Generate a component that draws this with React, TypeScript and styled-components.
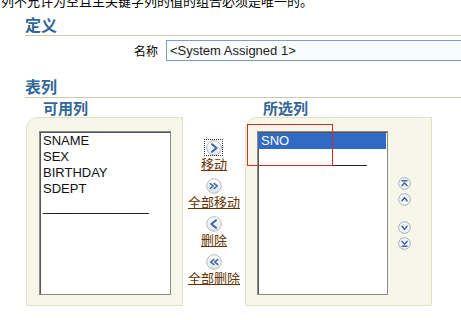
import * as React from 'react'
import styled, { createGlobalStyle } from 'styled-components'

const GlobalStyle = createGlobalStyle`
  html, body {
    margin: 0;
    padding: 0;
    background: #ffffff;
    overflow: hidden;
  }
  body {
    font-family: "Liberation Sans", "Noto Sans CJK SC", sans-serif;
    color: #000;
  }
`

const CJK = `"Noto Sans CJK SC", "Liberation Sans", sans-serif`

const Page = styled.div`
  width: 461px;
  height: 320px;
  overflow: hidden;
`

const Intro = styled.p`
  margin: -7px 0 0 1px;
  font-family: ${CJK};
  font-size: 13px;
  line-height: 15px;
  white-space: nowrap;
`

const Section = styled.section`
  padding-left: 25px;
`

const SectionTitle = styled.h2<{ $gap: number }>`
  margin: ${p => p.$gap}px 0 0;
  padding-bottom: 2px;
  font-family: ${CJK};
  font-size: 16px;
  line-height: 18px;
  font-weight: bold;
  color: #336699;
  border-bottom: 1px solid #cfcba8;
`

const FieldRow = styled.div`
  display: flex;
  align-items: center;
  margin-top: 4px;
  height: 21px;
`

const FieldLabel = styled.label`
  flex: none;
  width: 133px;
  margin-right: 8px;
  text-align: right;
  font-family: ${CJK};
  font-size: 12px;
`

const TextInput = styled.input`
  box-sizing: border-box;
  flex: none;
  width: 310px;
  height: 21px;
  padding: 0 3px;
  border: 1px solid #7f9db9;
  background: #f9fbfe;
  font-family: "Liberation Sans", sans-serif;
  font-size: 13px;
  color: #222;
  outline: none;
`

const Columns = styled.div`
  display: flex;
  align-items: flex-start;
  padding-left: 1px;
`

const Column = styled.div<{ $width: number }>`
  width: ${p => p.$width}px;
  flex: none;
`

const ColumnHeader = styled.h3<{ $indent: number }>`
  margin: 0;
  padding-left: ${p => p.$indent}px;
  height: 19px;
  font-family: ${CJK};
  font-size: 15px;
  line-height: 19px;
  font-weight: bold;
  color: #336699;
`

const Panel = styled.div<{ $padLeft: number; $padRight: number }>`
  position: relative;
  box-sizing: border-box;
  display: flex;
  align-items: flex-start;
  height: 189px;
  padding: 13px ${p => p.$padRight}px 0 ${p => p.$padLeft}px;
  background: #f7f7e9;
  border: 1px solid #e4e2c6;
  border-top-left-radius: 12px;
`

const ListBox = styled.div<{ $width: number }>`
  box-sizing: border-box;
  width: ${p => p.$width}px;
  height: 164px;
  flex: none;
  background: #ffffff;
  border: 1px solid #8a8a8a;
  box-shadow: inset 1px 1px 0 #555555;
  padding-top: 1px;
`

const ListItem = styled.div<{ $selected?: boolean }>`
  height: 16px;
  margin-right: 1px;
  padding-left: 3px;
  font-size: 13px;
  line-height: 16px;
  white-space: nowrap;
  color: ${p => (p.$selected ? '#ffffff' : '#111111')};
  background: ${p => (p.$selected ? '#316ac5' : 'transparent')};
`

const Separator = styled.div`
  height: 20px;
  padding-left: 3px;
  font-size: 13px;
  line-height: 20px;
  letter-spacing: -0.2px;
  white-space: nowrap;
  overflow: hidden;
`

const Buttons = styled.div`
  width: 62px;
  flex: none;
  display: flex;
  flex-direction: column;
  align-items: center;
  gap: 6px;
  padding-top: 41px;
`

const ShuttleGroup = styled.div`
  display: flex;
  flex-direction: column;
  align-items: center;
`

const IconButton = styled.button<{ $focused?: boolean }>`
  width: 19px;
  height: 17px;
  padding: 0;
  margin: 0;
  border: none;
  background: transparent;
  display: flex;
  align-items: center;
  justify-content: center;
  outline: ${p => (p.$focused ? '1px dotted #333' : 'none')};
  outline-offset: -1px;
`

const ShuttleLink = styled.a`
  font-family: ${CJK};
  font-size: 13px;
  line-height: 15px;
  color: #663300;
  text-decoration: underline;
  white-space: nowrap;
`

const Reorder = styled.div`
  width: 33px;
  flex: none;
  display: flex;
  flex-direction: column;
  align-items: center;
  padding-top: 45px;
`

const ReorderButton = styled.span<{ $gap: number }>`
  display: block;
  width: 13px;
  height: 13px;
  margin-top: ${p => p.$gap}px;
`

const Highlight = styled.div`
  position: absolute;
  left: 1px;
  top: 6px;
  width: 86px;
  height: 42px;
  box-sizing: border-box;
  border: 1px solid #d42a2a;
  pointer-events: none;
`

type Kind = 'move' | 'moveAll' | 'remove' | 'removeAll'

const chevrons: Record<Kind, string> = {
  move: 'M6 4.2 L10.6 8 L6 11.8',
  moveAll: 'M4.3 5.6 L7.3 8 L4.3 10.4 M8.3 5.6 L11.3 8 L8.3 10.4',
  remove: 'M10 4.2 L5.4 8 L10 11.8',
  removeAll: 'M7.7 5.6 L4.7 8 L7.7 10.4 M11.7 5.6 L8.7 8 L11.7 10.4',
}

const ShuttleIcon = ({ kind }: { kind: Kind }) => (
  <svg width="16" height="16" viewBox="0 0 16 16">
    <defs>
      <linearGradient id={`g-${kind}`} x1="0" y1="0" x2="0" y2="1">
        <stop offset="0" stopColor="#ffffff" />
        <stop offset="1" stopColor="#dfe4ea" />
      </linearGradient>
    </defs>
    <circle cx="8" cy="8" r="7.3" fill={`url(#g-${kind})`} stroke="#b3bcc6" strokeWidth="1" />
    <path
      d={chevrons[kind]}
      fill="none"
      stroke="#3a67a3"
      strokeWidth={kind === 'move' || kind === 'remove' ? 2 : 1.6}
      strokeLinecap="round"
      strokeLinejoin="round"
    />
  </svg>
)

type Order = 'top' | 'up' | 'down' | 'bottom'

const orderPaths: Record<Order, string> = {
  top: 'M4 3.8 H9 M4 8.6 L6.5 5.8 L9 8.6',
  up: 'M4 7.8 L6.5 4.6 L9 7.8',
  down: 'M4 5.2 L6.5 8.4 L9 5.2',
  bottom: 'M4 9.2 H9 M4 4.4 L6.5 7.2 L9 4.4',
}

const OrderIcon = ({ kind }: { kind: Order }) => (
  <svg width="13" height="13" viewBox="0 0 13 13">
    <circle cx="6.5" cy="6.5" r="5.8" fill="#f4f6f9" stroke="#a2aebb" strokeWidth="1" />
    <path d={orderPaths[kind]} fill="none" stroke="#3a67a3" strokeWidth="1.5" strokeLinecap="round" />
  </svg>
)

const available = ['SNAME', 'SEX', 'BIRTHDAY', 'SDEPT']
const selected = ['SNO']
const rule = '_'.repeat(15)

const shuttle: { kind: Kind; label: string }[] = [
  { kind: 'move', label: '移动' },
  { kind: 'moveAll', label: '全部移动' },
  { kind: 'remove', label: '删除' },
  { kind: 'removeAll', label: '全部删除' },
]

const order: { kind: Order; gap: number }[] = [
  { kind: 'top', gap: 0 },
  { kind: 'up', gap: 3 },
  { kind: 'down', gap: 15 },
  { kind: 'bottom', gap: 3 },
]

export default function App() {
  return (
    <Page>
      <GlobalStyle />
      <Intro>列不允许为空且主关键字列的值的组合必须是唯一的。</Intro>

      <Section>
        <SectionTitle $gap={7}>定义</SectionTitle>
        <FieldRow>
          <FieldLabel htmlFor="name">名称</FieldLabel>
          <TextInput id="name" defaultValue="<System Assigned 1>" />
        </FieldRow>
      </Section>

      <Section>
        <SectionTitle $gap={16}>表列</SectionTitle>
        <Columns>
          <Column $width={157}>
            <ColumnHeader $indent={17}>可用列</ColumnHeader>
            <Panel $padLeft={12} $padRight={11}>
              <ListBox $width={132}>
                {available.map(name => (
                  <ListItem key={name}>{name}</ListItem>
                ))}
                <Separator>{rule}</Separator>
              </ListBox>
            </Panel>
          </Column>

          <Buttons>
            {shuttle.map((b, i) => (
              <ShuttleGroup key={b.kind}>
                <IconButton $focused={i === 0} aria-label={b.label}>
                  <ShuttleIcon kind={b.kind} />
                </IconButton>
                <ShuttleLink href="#">{b.label}</ShuttleLink>
              </ShuttleGroup>
            ))}
          </Buttons>

          <Column $width={187}>
            <ColumnHeader $indent={18}>所选列</ColumnHeader>
            <Panel $padLeft={11} $padRight={10}>
              <ListBox $width={131}>
                {selected.map(name => (
                  <ListItem key={name} $selected>
                    {name}
                  </ListItem>
                ))}
                <Separator>{rule}</Separator>
              </ListBox>
              <Reorder>
                {order.map(o => (
                  <ReorderButton key={o.kind} $gap={o.gap}>
                    <OrderIcon kind={o.kind} />
                  </ReorderButton>
                ))}
              </Reorder>
              <Highlight />
            </Panel>
          </Column>
        </Columns>
      </Section>
    </Page>
  )
}
